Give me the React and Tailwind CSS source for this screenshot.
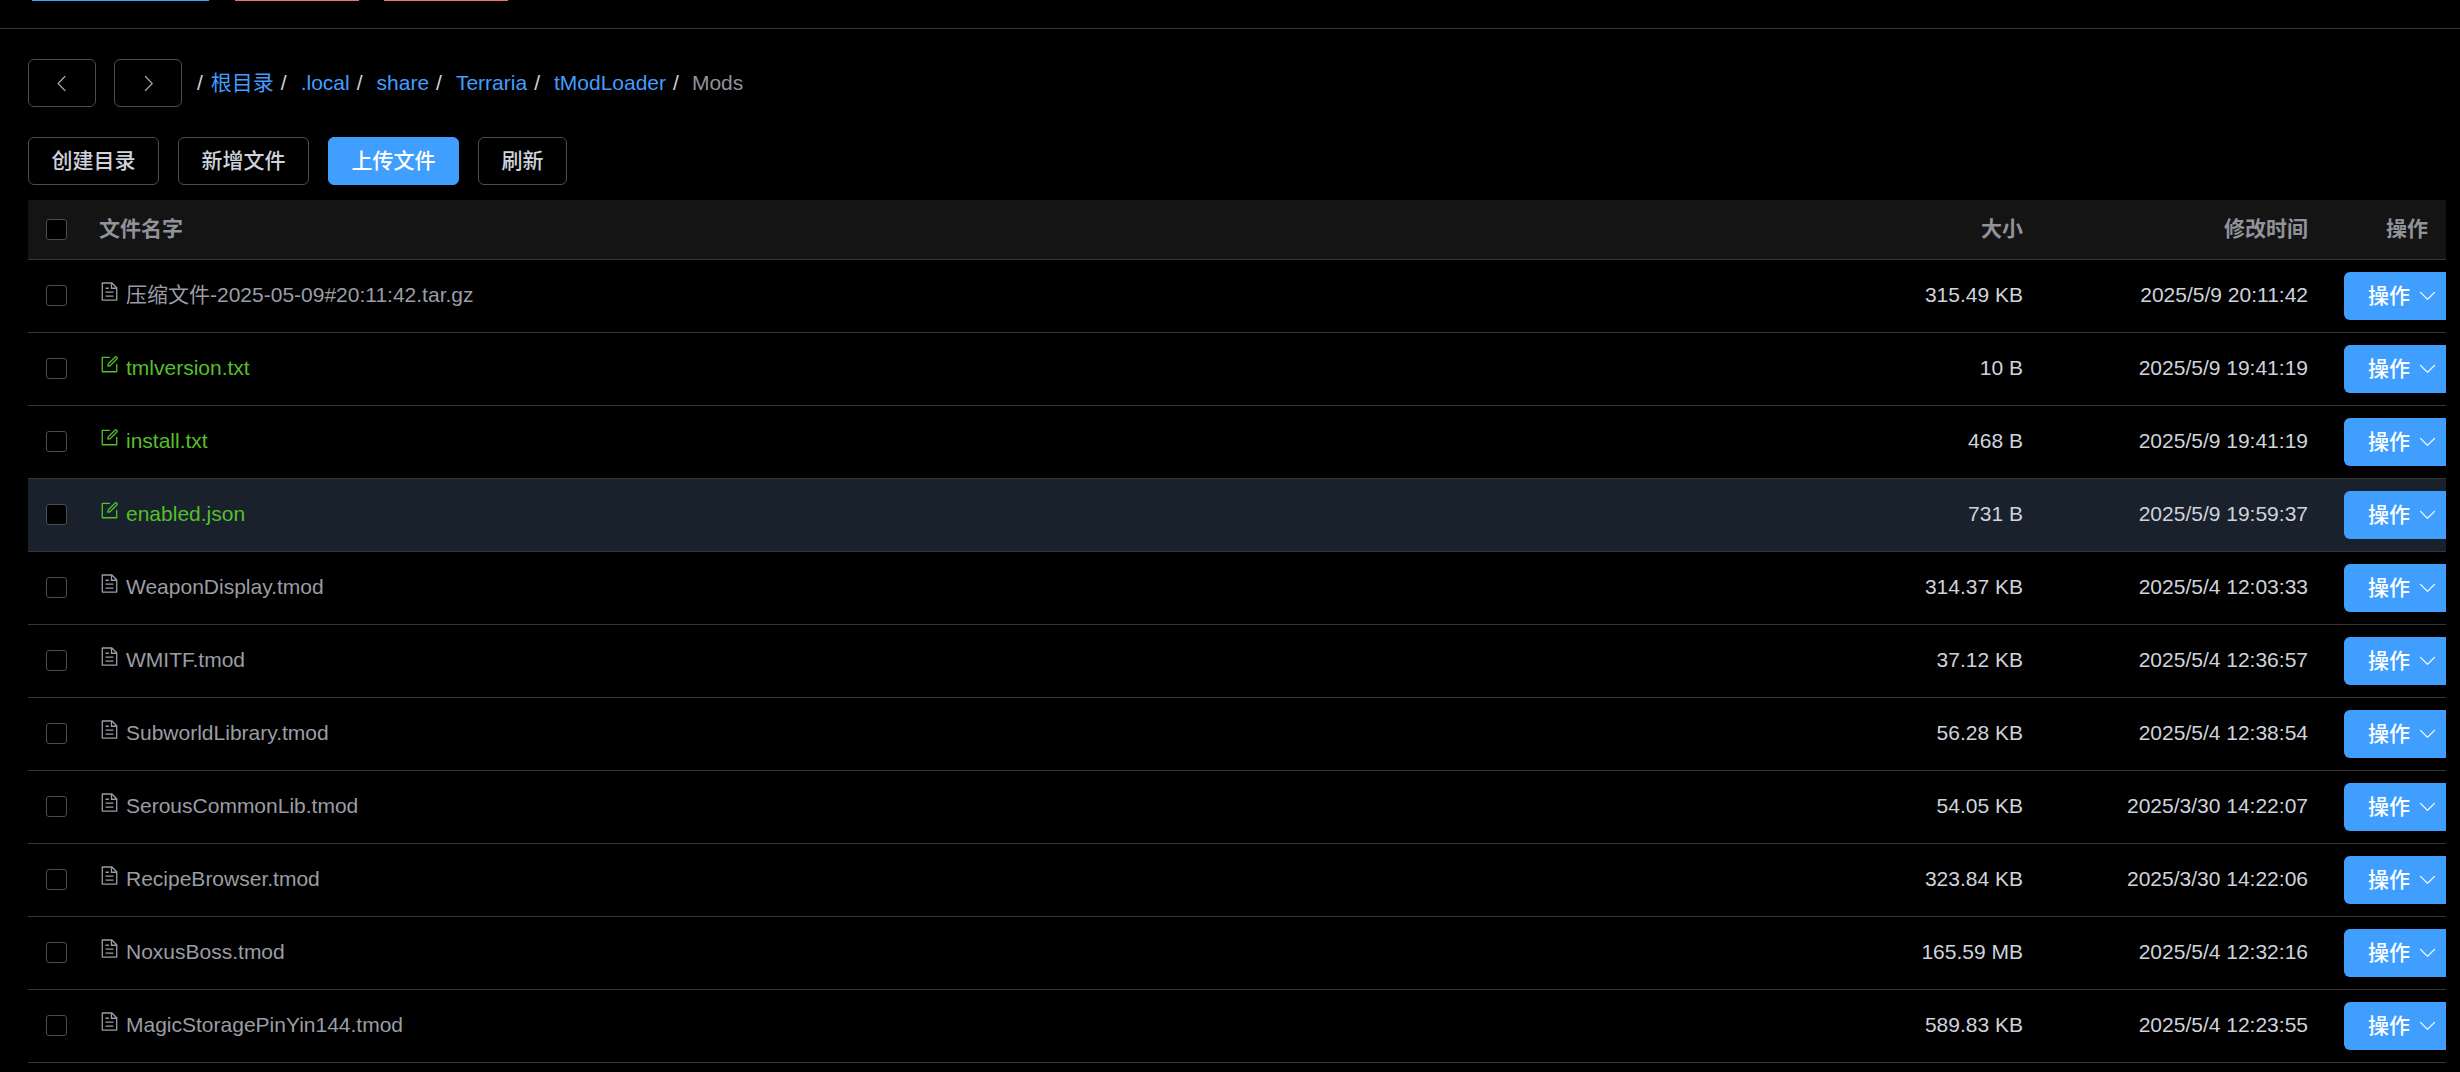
import React from 'react';

const FONT = 'font-["Liberation_Sans","Noto_Sans_CJK_SC",sans-serif]';

const files = [
  { name: '压缩文件-2025-05-09#20:11:42.tar.gz', size: '315.49 KB', time: '2025/5/9 20:11:42' },
  { name: 'tmlversion.txt', size: '10 B', time: '2025/5/9 19:41:19', editable: true },
  { name: 'install.txt', size: '468 B', time: '2025/5/9 19:41:19', editable: true },
  { name: 'enabled.json', size: '731 B', time: '2025/5/9 19:59:37', editable: true, hover: true },
  { name: 'WeaponDisplay.tmod', size: '314.37 KB', time: '2025/5/4 12:03:33' },
  { name: 'WMITF.tmod', size: '37.12 KB', time: '2025/5/4 12:36:57' },
  { name: 'SubworldLibrary.tmod', size: '56.28 KB', time: '2025/5/4 12:38:54' },
  { name: 'SerousCommonLib.tmod', size: '54.05 KB', time: '2025/3/30 14:22:07' },
  { name: 'RecipeBrowser.tmod', size: '323.84 KB', time: '2025/3/30 14:22:06' },
  { name: 'NoxusBoss.tmod', size: '165.59 MB', time: '2025/5/4 12:32:16' },
  { name: 'MagicStoragePinYin144.tmod', size: '589.83 KB', time: '2025/5/4 12:23:55' },
];

const crumbs = ['根目录', '.local', 'share', 'Terraria', 'tModLoader'];

// Element Plus 图标
const Icon = ({ d, className }) => (
  <svg viewBox="0 0 1024 1024" fill="currentColor" className={className}>
    {d.map((p) => <path key={p} d={p} />)}
  </svg>
);

const docIcon = ['M832 384H576V128H192v768h640V384zm-26.496-64L640 154.496V320h165.504zM160 64h480l256 256v608a32 32 0 0 1-32 32H160a32 32 0 0 1-32-32V96a32 32 0 0 1 32-32zm160 448h384v64H320v-64zm0-192h160v64H320v-64zm0 384h384v64H320v-64z'];
const editIcon = [
  'M832 512a32 32 0 1 1 64 0v352a32 32 0 0 1-32 32H160a32 32 0 0 1-32-32V160a32 32 0 0 1 32-32h352a32 32 0 0 1 0 64H192v640h640V512z',
  'm469.952 554.24 52.8-7.552L847.104 222.4a32 32 0 1 0-45.248-45.248L477.44 501.44l-7.552 52.8zm422.4-422.4a96 96 0 0 1 0 135.808l-331.84 331.84a32 32 0 0 1-18.112 9.088L436.8 623.68a32 32 0 0 1-36.224-36.224l15.104-105.6a32 32 0 0 1 9.024-18.112l331.904-331.84a96 96 0 0 1 135.744 0z',
];
const arrowLeft = ['M609.408 149.376 277.76 489.6a32 32 0 0 0 0 44.672l331.648 340.352a29.12 29.12 0 0 0 41.728 0 30.592 30.592 0 0 0 0-42.752L339.264 511.936l311.872-319.872a30.592 30.592 0 0 0 0-42.688 29.12 29.12 0 0 0-41.728 0z'];
const arrowRight = ['M340.864 149.312a30.592 30.592 0 0 0 0 42.752L652.736 512 340.864 831.872a30.592 30.592 0 0 0 0 42.752 29.12 29.12 0 0 0 41.728 0L714.24 534.336a32 32 0 0 0 0-44.672L382.592 149.376a29.12 29.12 0 0 0-41.728 0z'];
const arrowDown = ['M831.872 340.864 512 652.672 192.128 340.864a30.592 30.592 0 0 0-42.752 0 29.12 29.12 0 0 0 0 41.6L489.664 714.24a32 32 0 0 0 44.672 0l340.288-331.712a29.12 29.12 0 0 0 0-41.728 30.592 30.592 0 0 0-42.752 0z'];

const Checkbox = () => (
  <div className="w-[21px] h-[21px] rounded-[3px] border border-[#4c4d4f] bg-black" />
);

const ToolButton = ({ children, primary }) => (
  <button
    className={`h-[48px] px-[22.5px] rounded-[6px] border text-[21px] font-medium ${
      primary ? 'bg-[#409eff] border-[#409eff] text-white' : 'border-[#4c4d4f] text-[#cfd3dc]'
    }`}
  >
    {children}
  </button>
);

const NavButton = ({ d }) => (
  <button className="w-[68px] h-[48px] flex items-center justify-center rounded-[6px] border border-[#4c4d4f] text-[#a3a6ad]">
    <Icon d={d} className="w-[21px] h-[21px]" />
  </button>
);

const FileRow = ({ file }) => (
  <tr className={file.hover ? 'bg-[#19212c]' : ''}>
    <td className="h-[73px] pl-[18px] pb-px border-b border-[#363637]"><Checkbox /></td>
    <td className="h-[73px] pl-0 pb-[3px] border-b border-[#363637]">
      <div className={`flex items-center gap-[6px] ${file.editable ? 'text-[#55bf2a]' : 'text-[#9a9da4]'}`}>
        <Icon d={file.editable ? editIcon : docIcon} className="w-[21px] h-[21px] shrink-0 -translate-y-[3px]" />
        <span>{file.name}</span>
      </div>
    </td>
    <td className="h-[73px] pr-[17px] pb-[3px] text-right text-[#cfd3dc] border-b border-[#363637]">{file.size}</td>
    <td className="h-[73px] pr-[17px] pb-[3px] text-right text-[#cfd3dc] border-b border-[#363637]">{file.time}</td>
    <td className="h-[73px] pl-[19px] overflow-hidden border-b border-[#363637]">
      <button className="w-[140px] h-[48px] pl-[24px] pb-px flex items-center gap-[7px] rounded-[6px] bg-[#409eff] text-white font-medium">
        操作
        <Icon d={arrowDown} className="w-[21px] h-[21px]" />
      </button>
    </td>
  </tr>
);

export default function App() {
  return (
    <div className={`h-screen overflow-hidden bg-black text-[21px] ${FONT}`}>
      {/* 顶部被裁切的按钮 */}
      <div className="h-[29px] border-b border-[#363637] flex items-start pl-[32px]">
        <div className="w-[177px] h-px bg-[#409eff]" />
        <div className="w-[124px] h-px bg-[#f56c6c] ml-[26px]" />
        <div className="w-[124px] h-px bg-[#f56c6c] ml-[25px]" />
      </div>

      <div className="pl-[28px] pr-[14px] pt-[30px]">
        <div className="flex items-center h-[48px]">
          <NavButton d={arrowLeft} />
          <div className="ml-[18px]"><NavButton d={arrowRight} /></div>
          <nav className="flex items-center ml-[15px] text-[#cfd3dc]">
            <span>/</span>
            {crumbs.map((c) => (
              <React.Fragment key={c}>
                <a className="ml-[8px] text-[#409eff]">{c}</a>
                <span className="ml-[7px] mr-[6px]">/</span>
              </React.Fragment>
            ))}
            <span className="text-[#909399] ml-[7px]">Mods</span>
          </nav>
        </div>

        <div className="flex gap-[19px] mt-[30px]">
          <ToolButton>创建目录</ToolButton>
          <ToolButton>新增文件</ToolButton>
          <ToolButton primary>上传文件</ToolButton>
          <ToolButton>刷新</ToolButton>
        </div>

        <table className="table-fixed w-full mt-[15px] border-separate border-spacing-0">
          <colgroup>
            <col className="w-[71px]" />
            <col />
            <col className="w-[300px]" />
            <col className="w-[285px]" />
            <col className="w-[121px]" />
          </colgroup>
          <thead>
            <tr className="bg-[#141414] text-[#909399] font-bold">
              <th className="h-[60px] pl-[18px] border-b border-[#363637]"><Checkbox /></th>
              <th className="h-[60px] pb-px text-left border-b border-[#363637]">文件名字</th>
              <th className="h-[60px] pr-[17px] pb-px text-right border-b border-[#363637]">大小</th>
              <th className="h-[60px] pr-[17px] pb-px text-right border-b border-[#363637]">修改时间</th>
              <th className="h-[60px] pr-[18px] pb-px text-right border-b border-[#363637]">操作</th>
            </tr>
          </thead>
          <tbody>
            {files.map((f) => <FileRow key={f.name} file={f} />)}
          </tbody>
        </table>
      </div>
    </div>
  );
}
